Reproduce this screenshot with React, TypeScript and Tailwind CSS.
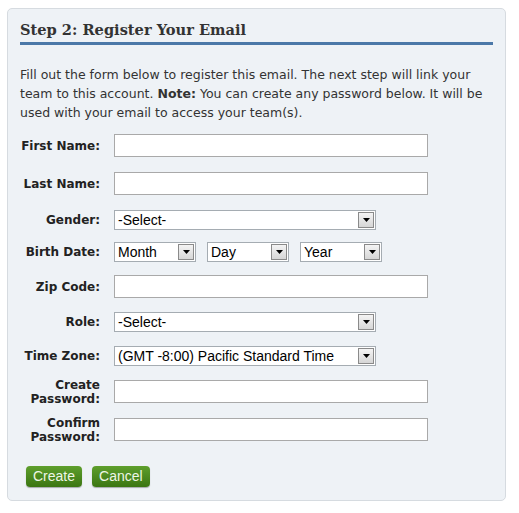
import React from 'react'

const sans = "font-['DejaVu_Sans',Verdana,sans-serif]"
const arial = "font-['Liberation_Sans',Arial,sans-serif]"

function Label({ children }: { children: React.ReactNode }) {
  return (
    <div className={`w-[80px] shrink-0 text-right text-[12px] leading-[14px] font-bold text-[#222] ${sans}`}>
      {children}
    </div>
  )
}

function TextBox() {
  return <div className="h-[23px] w-[314px] border border-[#a9a9a9] bg-white" />
}

function Dropdown({ value, width }: { value: string; width: string }) {
  return (
    <div className={`flex h-[20px] items-center border border-[#a5acb2] bg-white ${width}`}>
      <span className={`flex-1 truncate pl-[3px] text-[14px] text-black ${arial}`}>{value}</span>
      <div className="mr-[1px] flex h-[16px] w-[16px] items-center justify-center border border-[#8a8a8a] bg-gradient-to-b from-[#f4f4f4] to-[#d6d6d6]">
        <svg width="7" height="4" viewBox="0 0 7 4">
          <path d="M0 0h7L3.5 4z" fill="#000" />
        </svg>
      </div>
    </div>
  )
}

function Row({ label, children, className = '' }: { label: React.ReactNode; children: React.ReactNode; className?: string }) {
  return (
    <div className={`flex items-center gap-[14px] ${className}`}>
      <Label>{label}</Label>
      {children}
    </div>
  )
}

function GreenButton({ children }: { children: React.ReactNode }) {
  return (
    <button className={`h-[21px] rounded-[4px] bg-gradient-to-b from-[#5e9f2c] to-[#3b7612] px-[7px] text-[14px] leading-[21px] text-[#eef6e6] shadow-[0_1px_1px_rgba(0,0,0,0.3)] ${arial}`}>
      {children}
    </button>
  )
}

export default function App() {
  return (
    <div className="h-[513px] w-[519px] bg-white pl-[7px] pt-[8px]">
      <div className="h-[493px] w-[499px] rounded-[5px] border border-[#d6dbe0] bg-[#eef2f6] px-[12px] pt-[11px]">
        <h2 className="border-b-[3px] border-[#4b78a8] pb-[3px] font-['DejaVu_Serif',Georgia,serif] text-[14.6px] leading-[19px] font-bold text-[#333]">
          Step 2: Register Your Email
        </h2>
        <p className={`mt-[20px] text-[12.5px] leading-[19px] text-[#333] ${sans}`}>
          Fill out the form below to register this email. The next step will link your team to this account.{' '}
          <b>Note:</b> You can create any password below. It will be used with your email to access your team(s).
        </p>

        <div className="mt-[12px]">
          <Row label="First Name:" className="h-[23px]">
            <TextBox />
          </Row>
          <Row label="Last Name:" className="mt-[15px] h-[23px]">
            <TextBox />
          </Row>
          <Row label="Gender:" className="mt-[15px] h-[20px]">
            <Dropdown value="-Select-" width="w-[262px]" />
          </Row>
          <Row label="Birth Date:" className="mt-[12px] h-[20px]">
            <div className="flex gap-[11px]">
              <Dropdown value="Month" width="w-[82px]" />
              <Dropdown value="Day" width="w-[82px]" />
              <Dropdown value="Year" width="w-[82px]" />
            </div>
          </Row>
          <Row label="Zip Code:" className="mt-[13px] h-[23px]">
            <TextBox />
          </Row>
          <Row label="Role:" className="mt-[14px] h-[20px]">
            <Dropdown value="-Select-" width="w-[262px]" />
          </Row>
          <Row label="Time Zone:" className="mt-[14px] h-[20px]">
            <Dropdown value="(GMT -8:00) Pacific Standard Time" width="w-[262px]" />
          </Row>
          <Row label={<>Create<br />Password:</>} className="mt-[14px] h-[23px]">
            <TextBox />
          </Row>
          <Row label={<>Confirm<br />Password:</>} className="mt-[15px] h-[23px]">
            <TextBox />
          </Row>
          <div className="mt-[25px] flex gap-[10px] pl-[6px]">
            <GreenButton>Create</GreenButton>
            <GreenButton>Cancel</GreenButton>
          </div>
        </div>
      </div>
    </div>
  )
}
